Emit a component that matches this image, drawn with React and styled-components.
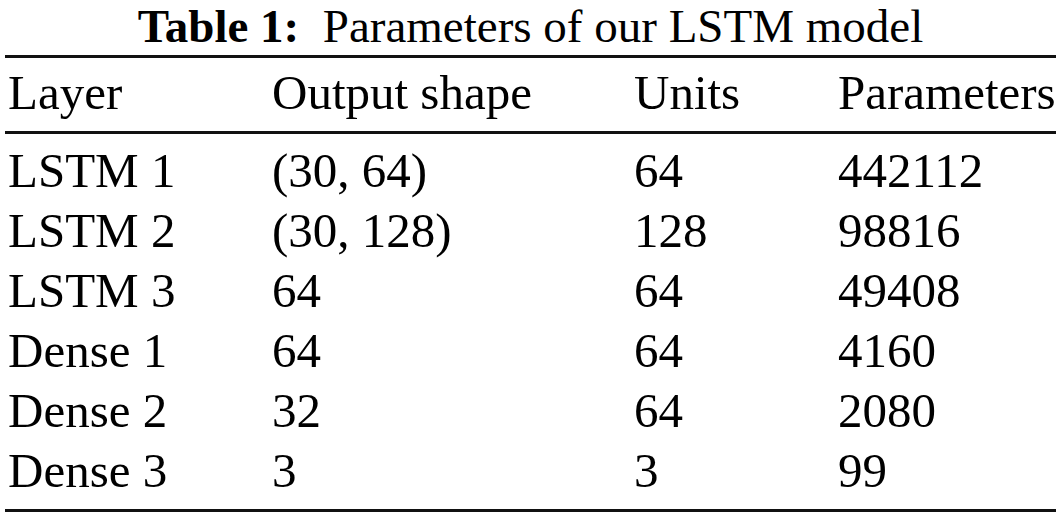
import React from "react";
import styled, { createGlobalStyle } from "styled-components";

const Global = createGlobalStyle`
  html, body { margin: 0; padding: 0; background: #fff; }
  body { font-family: "Liberation Serif", "Times New Roman", serif; color: #000; }
`;

const Page = styled.div`
  padding: 0 6px 0 5px;
  width: 1051px;
`;

const Caption = styled.div`
  font-size: 47px;
  line-height: 52px;
  text-align: center;
  white-space: pre;
  margin-bottom: 3px;
`;

const CaptionLabel = styled.span`
  font-weight: bold;
`;

const Rule = styled.div`
  height: ${(p) => p.$h}px;
  background: #111;
`;

const Grid = styled.div`
  display: grid;
  grid-template-columns: 264px 362px 204px 221px;
  padding: ${(p) => p.$pad};
  font-size: 49px;
  line-height: 60px;
`;

const Cell = styled.div`
  padding-left: 3px;
  white-space: nowrap;
`;

const header = ["Layer", "Output shape", "Units", "Parameters"];
const rows = [
  ["LSTM 1", "(30, 64)", "64", "442112"],
  ["LSTM 2", "(30, 128)", "128", "98816"],
  ["LSTM 3", "64", "64", "49408"],
  ["Dense 1", "64", "64", "4160"],
  ["Dense 2", "32", "64", "2080"],
  ["Dense 3", "3", "3", "99"],
];

export default function App() {
  return (
    <Page>
      <Global />
      <Caption>
        <CaptionLabel>Table 1:</CaptionLabel>
        {"  Parameters of our LSTM model"}
      </Caption>
      <Rule $h={3} />
      <Grid $pad="5px 0 8px">
        {header.map((h) => (
          <Cell key={h}>{h}</Cell>
        ))}
      </Grid>
      <Rule $h={3} />
      <Grid $pad="7px 0 8px">
        {rows.map((r) => r.map((c, i) => <Cell key={r[0] + i}>{c}</Cell>))}
      </Grid>
      <Rule $h={3} />
    </Page>
  );
}
